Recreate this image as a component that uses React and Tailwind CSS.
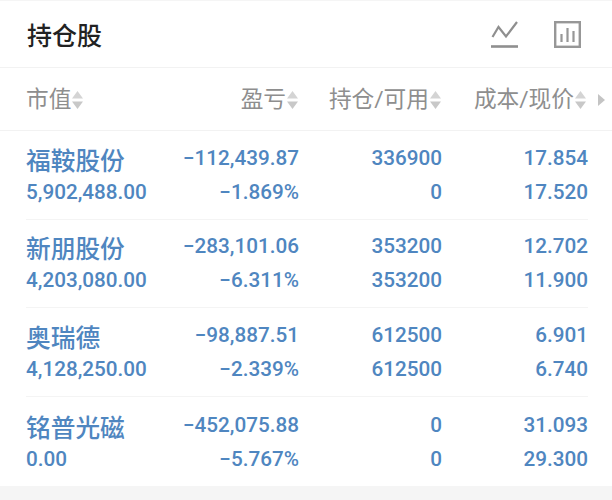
const rows = [
  ["福鞍股份", "5,902,488.00", "−112,439.87", "−1.869%", "336900", "0", "17.854", "17.520"],
  ["新朋股份", "4,203,080.00", "−283,101.06", "−6.311%", "353200", "353200", "12.702", "11.900"],
  ["奥瑞德", "4,128,250.00", "−98,887.51", "−2.339%", "612500", "612500", "6.901", "6.740"],
  ["铭普光磁", "0.00", "−452,075.88", "−5.767%", "0", "0", "31.093", "29.300"],
];

const font = { fontFamily: '"Roboto", "Noto Sans CJK SC", sans-serif' };

function Sort() {
  return (
    <svg width="13" height="20" viewBox="0 0 13 20" className="shrink-0">
      <path d="M6.5 1 L12 8.5 H1 Z" fill="#d4d4d4" />
      <path d="M6.5 19 L12 11.5 H1 Z" fill="#c8c8c8" />
    </svg>
  );
}

function Head({ children, className }) {
  return (
    <div className={"flex items-center text-[22.7px] leading-[30px] whitespace-nowrap text-[#8e8e8e] " + className}>
      <span>{children}</span>
      <Sort />
    </div>
  );
}

export default function App() {
  return (
    <div className="w-[612px] h-[500px] bg-white flex flex-col overflow-hidden" style={font}>
      <div className="h-[2px] bg-[#f5f5f5]" />
      <div className="h-[67px] shrink-0 flex items-center justify-between pl-[27px] pr-[31px] border-b border-[#f2f2f2]">
        <div className="text-[25px] font-medium text-[#222222] pt-[5px]">持仓股</div>
        <div className="flex items-center gap-[35px] pt-[2px]">
          <svg width="28" height="27" viewBox="0 0 28 27" fill="none" stroke="#8f8f8f">
            <path d="M1.5 16 L7.5 6 L15 15.5 L26 1" strokeWidth="2.2" />
            <path d="M0 25.5 H27" strokeWidth="2.6" />
          </svg>
          <svg width="27" height="27" viewBox="0 0 27 27" fill="none" stroke="#979797">
            <rect x="1.2" y="1.2" width="24.6" height="24.6" strokeWidth="2.4" />
            <path d="M7.5 13 V21 M13.5 7 V21 M19.5 10 V21" strokeWidth="2.2" />
          </svg>
        </div>
      </div>
      <div className="h-[63px] shrink-0 grid grid-cols-[140px_133px_143px_145px_1fr] items-center border-b border-[#f2f2f2] pl-[26px] pt-[2px]">
        <Head className="justify-start">市值</Head>
        <Head className="justify-end">盈亏</Head>
        <Head className="justify-end">持仓/可用</Head>
        <Head className="justify-end">成本/现价</Head>
        <svg width="9" height="14" viewBox="0 0 9 14" className="ml-[10px]">
          <path d="M1 1 L8 7 L1 13 Z" fill="#c4c4c4" />
        </svg>
      </div>
      <div className="flex-1 pl-[26px] pr-[24px] text-[#4f86c0]">
        {rows.map((r, i) => (
          <div
            key={r[0]}
            className={
              "grid grid-cols-[140px_133px_143px_146px] text-[20.7px] font-medium leading-[34px] content-center " +
              (i === 3 ? "h-[89px]" : "h-[88.7px] border-b border-[#f4f4f4]")
            }
          >
            <div className="text-[24.7px] whitespace-nowrap h-[34px] pt-[4px] box-border">{r[0]}</div>
            <div className="text-right whitespace-nowrap">{r[2]}</div>
            <div className="text-right">{r[4]}</div>
            <div className="text-right">{r[6]}</div>
            <div className="whitespace-nowrap">{r[1]}</div>
            <div className="text-right">{r[3]}</div>
            <div className="text-right">{r[5]}</div>
            <div className="text-right">{r[7]}</div>
          </div>
        ))}
      </div>
      <div className="h-[14px] shrink-0 bg-[#f5f5f5]" />
    </div>
  );
}
